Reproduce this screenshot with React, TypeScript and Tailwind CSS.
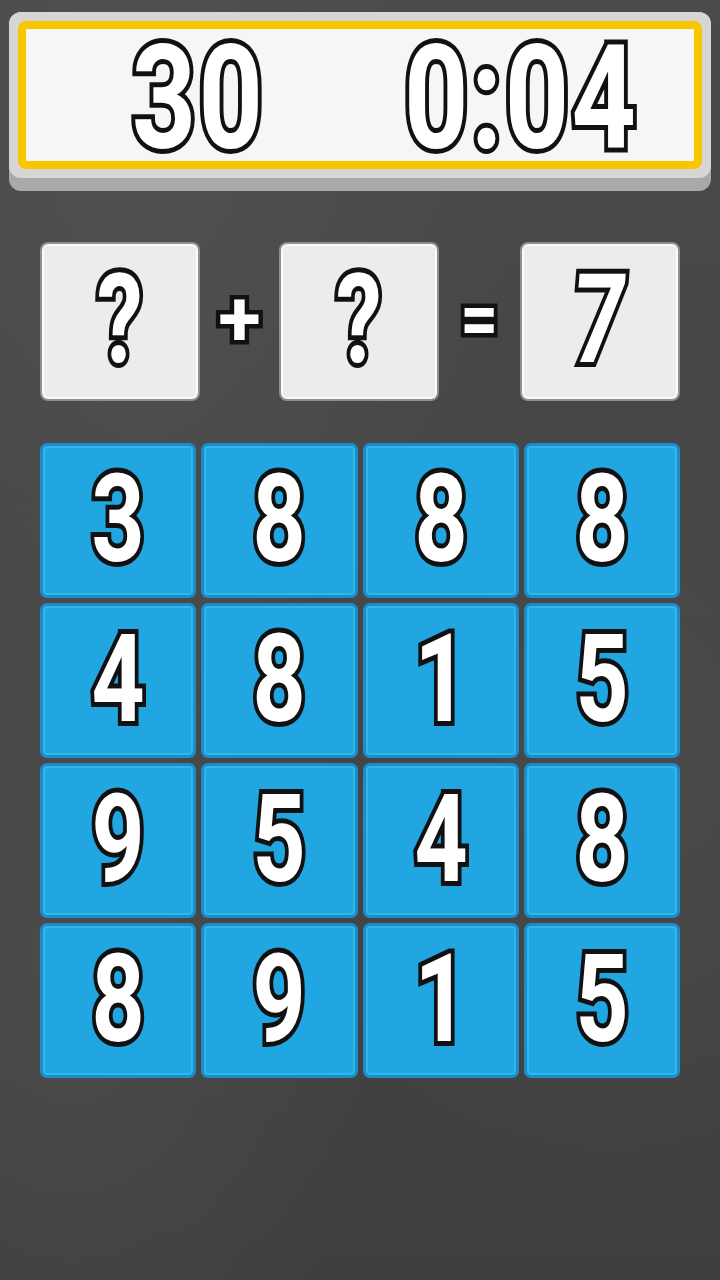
import React from "react";

const board = [
  [3, 8, 8, 8],
  [4, 8, 1, 5],
  [9, 5, 4, 8],
  [8, 9, 1, 5],
];

// white digits with a black outline, squeezed to look like a condensed face
const Outlined = ({ children, className }: { children: React.ReactNode; className: string }) => {
  return (
    <span
      className={
        "inline-block font-['Roboto','Liberation_Sans',sans-serif] font-bold leading-none text-white [paint-order:stroke_fill] " +
        className
      }
    >
      {children}
    </span>
  );
};

const EqBox = ({ value, extra = "" }: { value: string; extra?: string }) => {
  return (
    <div className="w-[160px] h-[159px] rounded-[8px] border-2 border-[#8f8f8f] bg-[#ececec] shadow-[inset_0_0_0_2px_#fafafa] flex items-center justify-center">
      <Outlined className={"text-[124px] -mt-[4px] scale-x-[0.74] [-webkit-text-stroke:10px_#111] " + extra}>
        {value}
      </Outlined>
    </div>
  );
};

export default function App() {
  return (
    <div className="w-[720px] h-[1280px] overflow-hidden bg-[#434343] bg-[radial-gradient(ellipse_at_20%_10%,#505050_0%,transparent_45%),radial-gradient(ellipse_at_85%_60%,#4a4a4a_0%,transparent_40%),radial-gradient(ellipse_at_10%_75%,#4b4b4b_0%,transparent_35%),linear-gradient(#4a4a4a,#3f3f3f)] flex flex-col">
      {/* score / timer panel */}
      <div className="mx-[9px] mt-[12px] h-[179px] rounded-[12px] bg-[#a9a9a9]">
        <div className="h-[166px] rounded-[12px] bg-[#d6d6d6] px-[9px] py-[9px]">
          <div className="h-full rounded-[8px] bg-[#f7c600] p-[8px]">
            <div className="h-full bg-[#f6f6f6] grid grid-cols-2 px-[12px]">
              <div className="flex items-center justify-center">
                <Outlined className="text-[144px] -mt-[2px] tracking-[3px] scale-x-[0.78] [-webkit-text-stroke:10px_#111]">
                  30
                </Outlined>
              </div>
              <div className="flex items-center justify-center">
                <Outlined className="text-[144px] -mt-[2px] tracking-[3px] scale-x-[0.78] [-webkit-text-stroke:10px_#111]">
                  0:04
                </Outlined>
              </div>
            </div>
          </div>
        </div>
      </div>

      {/* equation */}
      <div className="mt-[51px] px-[40px] flex items-center justify-between">
        <EqBox value="?" />
        <Outlined className="text-[78px] -mt-[6px] [-webkit-text-stroke:9px_#111]">+</Outlined>
        <EqBox value="?" />
        <Outlined className="text-[78px] -mt-[6px] scale-x-[0.85] [-webkit-text-stroke:9px_#111]">=</Outlined>
        <EqBox value="7" extra="-skew-x-[6deg]" />
      </div>

      {/* number tiles */}
      <div className="mt-[42px] mx-[40px] grid grid-cols-4 gap-[5px]">
        {board.flat().map((n, i) => (
          <div
            key={i}
            className="h-[155px] rounded-[7px] border-[3px] border-[#1a8ecb] bg-[#22a6e1] shadow-[inset_0_0_0_2px_#35b4ea] flex items-center justify-center"
          >
            <Outlined className="text-[122px] -mt-[2px] scale-x-[0.76] [-webkit-text-stroke:10px_#111]">{n}</Outlined>
          </div>
        ))}
      </div>
    </div>
  );
}
